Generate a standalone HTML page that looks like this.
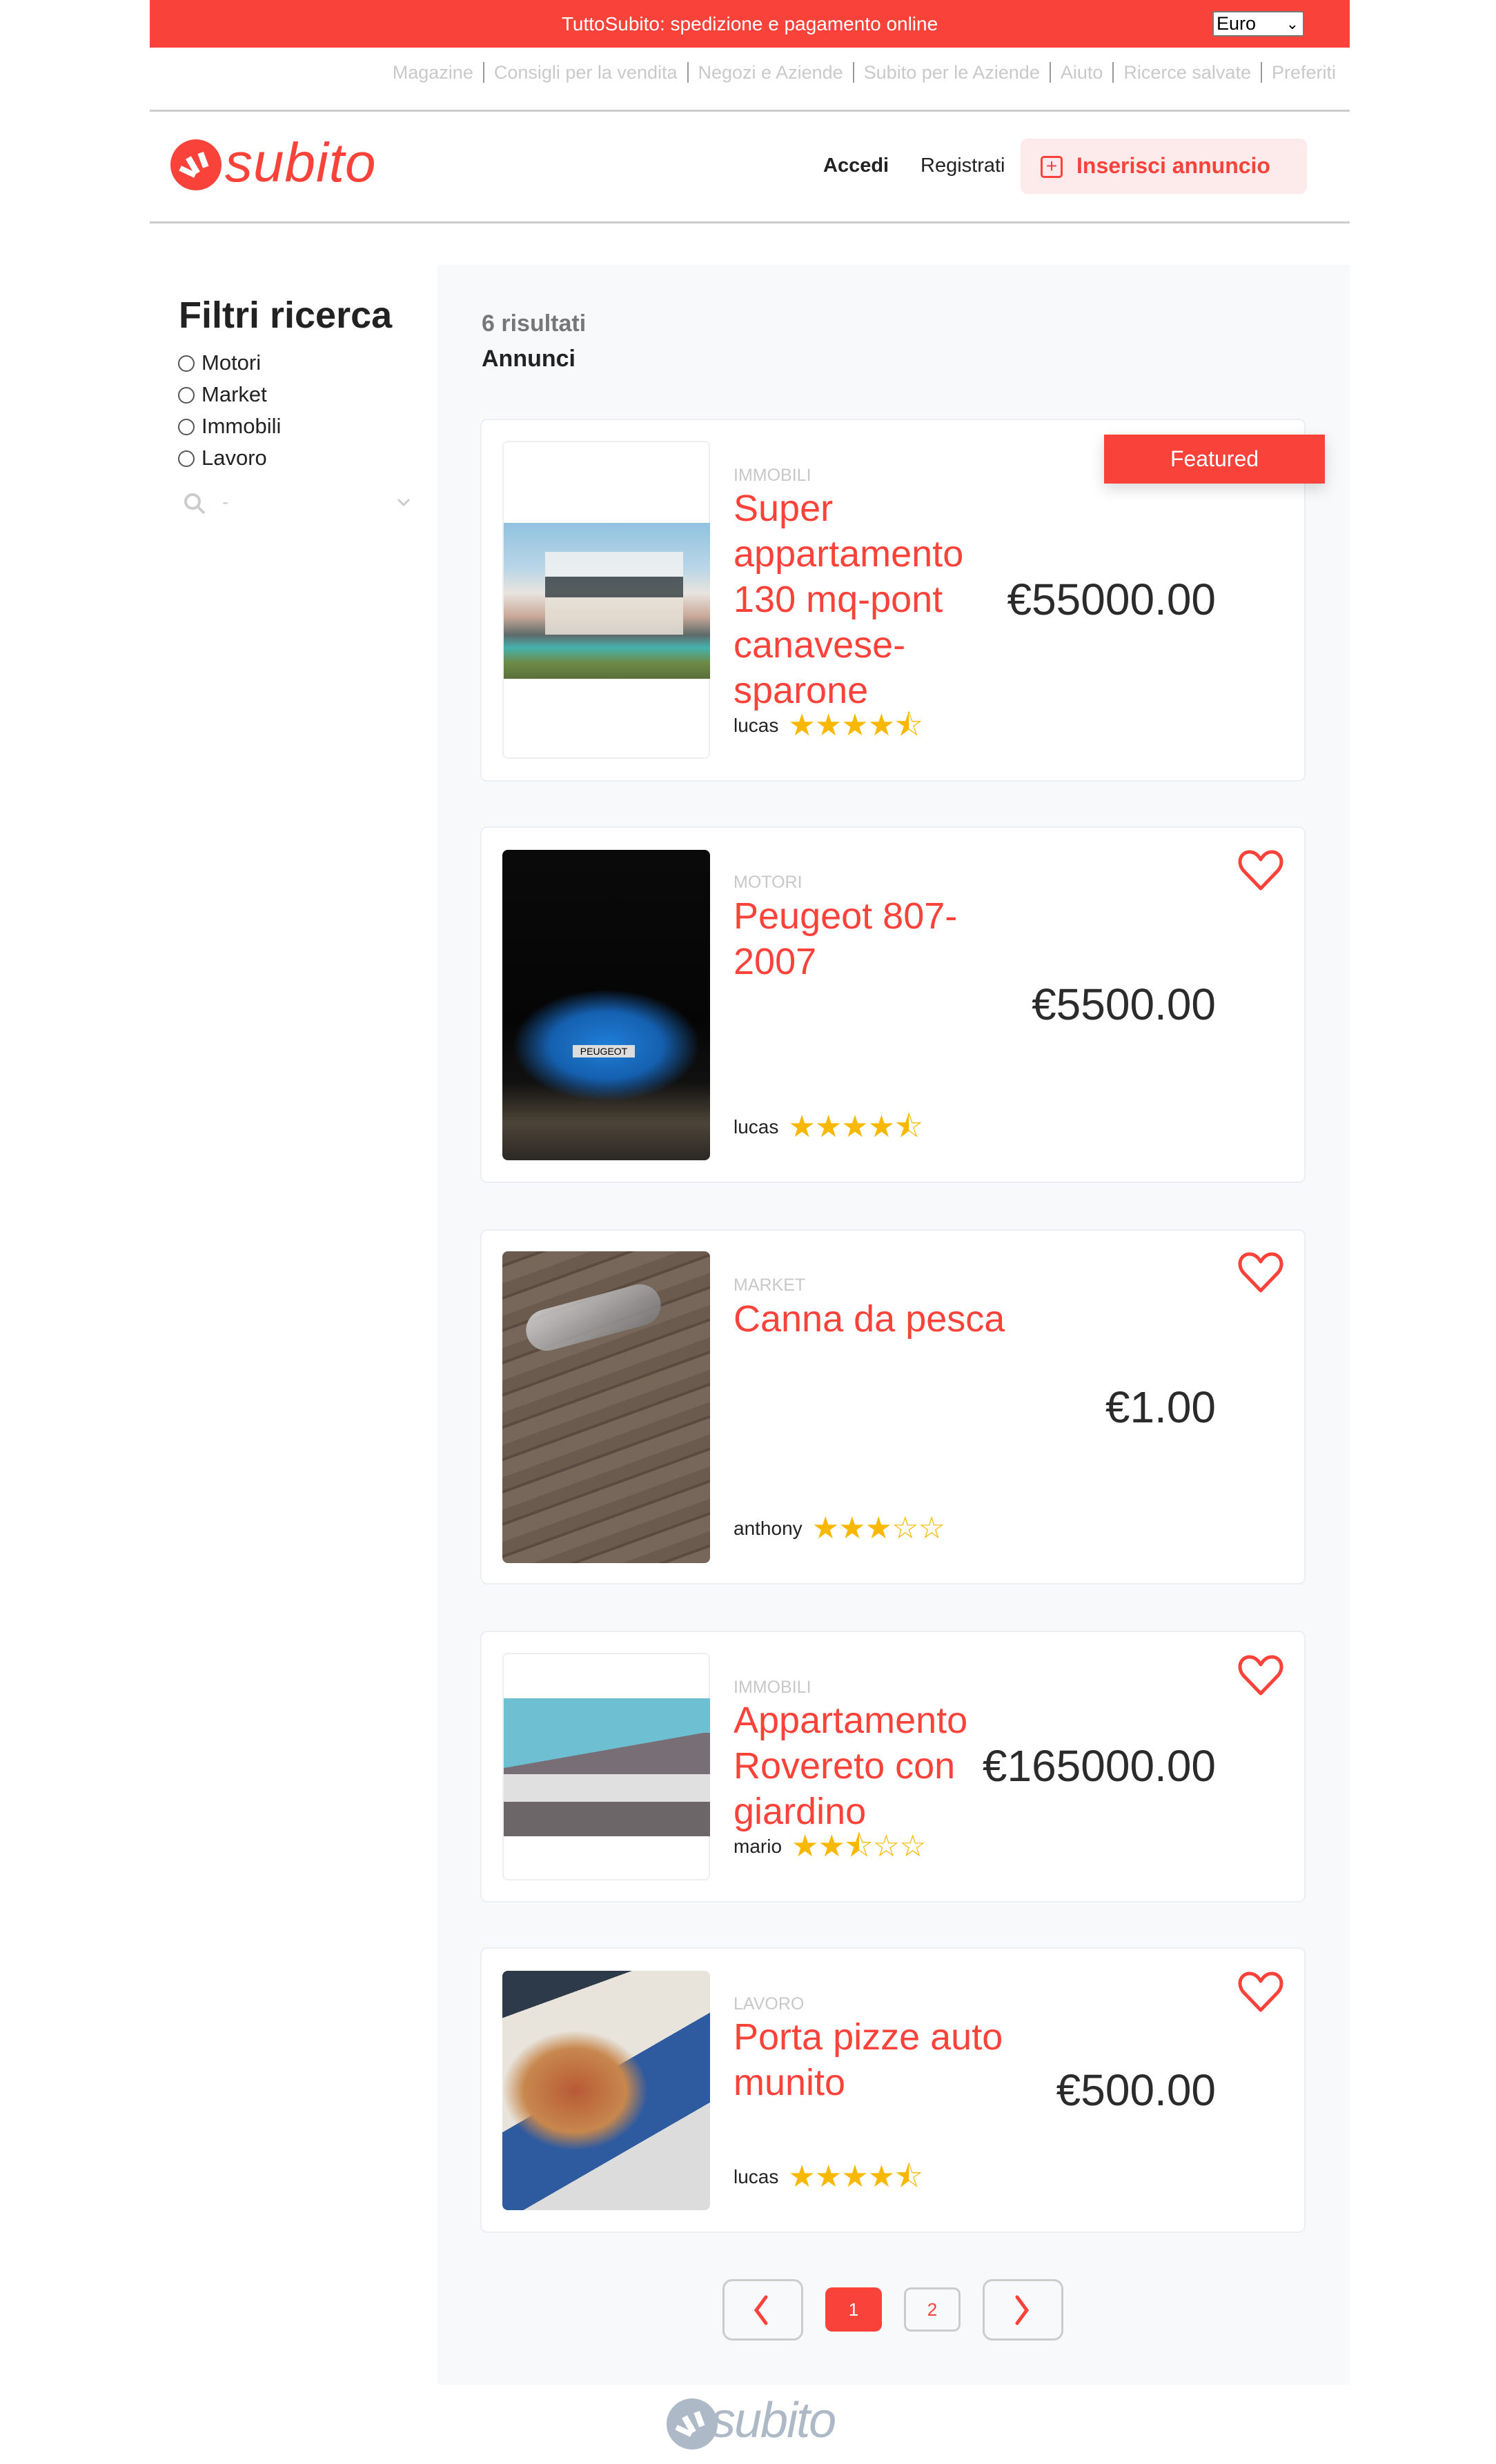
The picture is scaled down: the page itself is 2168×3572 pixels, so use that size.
<!DOCTYPE html>
<html><head><meta charset="utf-8">
<style>
*{margin:0;padding:0;box-sizing:border-box}
body{width:2168px;height:3572px;position:relative;background:#fff;font-family:"Liberation Sans",Arial,sans-serif;overflow:hidden}
.a{position:absolute;white-space:nowrap}
.red{color:#f9423a}
.card{position:absolute;left:696px;width:1196px;background:#fff;border:2px solid #eceef1;border-radius:10px}
.img{position:absolute;left:728px;width:301px;border-radius:8px;overflow:hidden}
.cat{position:absolute;left:1063px;font-size:25px;color:#c8c8c8;line-height:30px}
.title{position:absolute;left:1063px;font-size:54px;line-height:66px;color:#f9423a;white-space:nowrap}
.price{position:absolute;right:406px;font-size:64px;line-height:76px;color:#2b2b2b;white-space:nowrap}
.user{position:absolute;left:1063px;font-size:28px;line-height:40px;color:#222;white-space:nowrap}
.user span{color:#f8b800;font-size:44px;vertical-align:-5px;letter-spacing:-1px;margin-left:14px}
.heart{position:absolute;left:1792px;width:70px;height:64px}
.nav{color:#c9c9c9;font-size:27px}
.nav i{display:inline-block;width:2px;height:30px;background:#999;vertical-align:-6px;margin:0 14px}
</style></head><body>
<div class="a" style="left:217px;top:0;width:1739px;height:69px;background:#f9423a"></div>
<div class="a" style="left:217px;top:0;width:1739px;height:69px;line-height:70px;text-align:center;color:#fff;font-size:28px">TuttoSubito: spedizione e pagamento online</div>
<div class="a" style="left:1757px;top:16px;width:133px;height:37px;background:#fff;border:2px solid #777;border-radius:3px;font-size:27px;line-height:33px;padding-left:4px;color:#000">Euro<span style="position:absolute;right:6px;top:0;font-size:22px">&#8964;</span></div>
<div class="a nav" style="right:232px;top:88px;line-height:34px">Magazine<i></i>Consigli per la vendita<i></i>Negozi e Aziende<i></i>Subito per le Aziende<i></i>Aiuto<i></i>Ricerce salvate<i></i>Preferiti</div>
<div class="a" style="left:217px;top:159px;width:1739px;height:3px;background:#ccc"></div>
<svg class="a" style="left:246px;top:201px" width="76" height="76" viewBox="0 0 76 76"><circle cx="38" cy="38" r="37" fill="#f9423a"/><rect x="29" y="26" width="9" height="26" fill="#fff" transform="rotate(-30 33 39)"/><rect x="44" y="20" width="9" height="22" fill="#fff" transform="rotate(-20 48 31)"/><rect x="14" y="44" width="24" height="8" fill="#fff" transform="rotate(25 26 48)"/></svg>
<div class="a red" style="left:326px;top:186px;font-size:80px;line-height:100px;letter-spacing:1px;font-style:italic">subito</div>
<div class="a" style="left:1193px;top:224px;font-size:29px;font-weight:bold;color:#222">Accedi</div>
<div class="a" style="left:1334px;top:224px;font-size:29px;color:#222">Registrati</div>
<div class="a" style="left:1479px;top:201px;width:415px;height:80px;background:#fdeaea;border-radius:10px"></div>
<div class="a" style="left:1508px;top:226px;width:32px;height:32px;border:3px solid #f9423a;border-radius:5px;color:#f9423a;font-size:28px;line-height:24px;text-align:center">+</div>
<div class="a red" style="left:1560px;top:222px;font-size:32px;font-weight:bold">Inserisci annuncio</div>
<div class="a" style="left:217px;top:321px;width:1739px;height:3px;background:#ccc"></div>
<div class="a" style="left:634px;top:384px;width:1322px;height:3073px;background:#f8f9fb"></div>
<div class="a" style="left:259px;top:426px;font-size:54px;font-weight:bold;color:#222">Filtri ricerca</div>
<div class="a" style="left:258px;top:508px;font-size:31px;line-height:36px;color:#222">
<div style="height:46px"><span style="display:inline-block;width:24px;height:24px;border:2px solid #555;border-radius:50%;vertical-align:-3px;margin-right:10px"></span>Motori</div>
<div style="height:46px"><span style="display:inline-block;width:24px;height:24px;border:2px solid #555;border-radius:50%;vertical-align:-3px;margin-right:10px"></span>Market</div>
<div style="height:46px"><span style="display:inline-block;width:24px;height:24px;border:2px solid #555;border-radius:50%;vertical-align:-3px;margin-right:10px"></span>Immobili</div>
<div style="height:46px"><span style="display:inline-block;width:24px;height:24px;border:2px solid #555;border-radius:50%;vertical-align:-3px;margin-right:10px"></span>Lavoro</div>
</div>
<svg class="a" style="left:265px;top:713px" width="36" height="36" viewBox="0 0 36 36"><circle cx="14" cy="14" r="10" fill="none" stroke="#ccc" stroke-width="4"/><line x1="21" y1="21" x2="31" y2="31" stroke="#ccc" stroke-width="4"/></svg>
<div class="a" style="left:322px;top:712px;color:#ccc;font-size:28px">-</div>
<svg class="a" style="left:574px;top:720px" width="22" height="16" viewBox="0 0 22 16"><path d="M3 4 L11 12 L19 4" fill="none" stroke="#ccc" stroke-width="3"/></svg>
<div class="a" style="left:698px;top:450px;font-size:34px;font-weight:bold;color:#777">6 risultati</div>
<div class="a" style="left:698px;top:501px;font-size:34px;font-weight:bold;color:#222">Annunci</div>

<div class="card" style="top:607px;height:526px"></div>
<div class="img" style="top:639px;height:461px;border:2px solid #eee;background:#fff"></div>
<div class="a" style="left:730px;top:758px;width:299px;height:226px;background:linear-gradient(180deg,#8fc2e0 0%,#bcd6e6 30%,#e8e4df 45%,#c9a898 60%,#5d6a6a 72%,#46b1ad 80%,#6e8a45 90%,#59703a 100%)"></div>
<div class="a" style="left:790px;top:800px;width:200px;height:120px;background:linear-gradient(180deg,#f2f2f2 0 30%,#3a4448 30% 55%,#e8e2d8 55% 100%);opacity:.85"></div>
<div class="cat" style="top:674px">IMMOBILI</div>
<div class="title" style="top:704px">Super<br>appartamento<br>130 mq-pont<br>canavese-<br>sparone</div>
<div class="price" style="top:831px">€55000.00</div>
<div class="user" style="top:1032px">lucas<span>★★★★⯪</span></div>
<div class="a" style="left:1600px;top:630px;width:320px;height:71px;background:#f9423a;box-shadow:0 8px 20px rgba(0,0,0,.15);color:#fff;font-size:32px;line-height:71px;text-align:center">Featured</div>

<div class="card" style="top:1198px;height:517px"></div>
<div class="img" style="top:1232px;height:450px;background:radial-gradient(ellipse 45% 18% at 50% 63%,#1f7fd8 0%,#1560b0 60%,transparent 100%),linear-gradient(180deg,#0a0a0a 0%,#050505 55%,#111 75%,#4d4438 88%,#2c2824 100%)"></div>
<div class="a" style="left:830px;top:1515px;width:90px;height:18px;background:#ddd;font-size:14px;text-align:center;line-height:18px">PEUGEOT</div>
<svg class="heart" style="top:1230px" viewBox="0 0 70 64"><path d="M35 58 L10 32 C0 20 6 5 19 5 C27 5 32 11 35 16 C38 11 43 5 51 5 C64 5 70 20 60 32 Z" fill="none" stroke="#f9423a" stroke-width="5" stroke-linejoin="round"/></svg>
<div class="cat" style="top:1264px">MOTORI</div>
<div class="title" style="top:1295px">Peugeot 807-<br>2007</div>
<div class="price" style="top:1418px">€5500.00</div>
<div class="user" style="top:1614px">lucas<span>★★★★⯪</span></div>

<div class="card" style="top:1782px;height:515px"></div>
<div class="img" style="top:1814px;height:452px;background:repeating-linear-gradient(160deg,#6b5a4e 0 18px,#5a4a40 18px 22px,#77665a 22px 44px),linear-gradient(#6b5a4e,#3e332c)"></div>
<div class="a" style="left:760px;top:1880px;width:200px;height:60px;border-radius:30px;background:linear-gradient(160deg,#d8d8d8,#777);transform:rotate(-15deg);opacity:.85"></div>
<svg class="heart" style="top:1813px" viewBox="0 0 70 64"><path d="M35 58 L10 32 C0 20 6 5 19 5 C27 5 32 11 35 16 C38 11 43 5 51 5 C64 5 70 20 60 32 Z" fill="none" stroke="#f9423a" stroke-width="5" stroke-linejoin="round"/></svg>
<div class="cat" style="top:1848px">MARKET</div>
<div class="title" style="top:1879px">Canna da pesca</div>
<div class="price" style="top:2002px">€1.00</div>
<div class="user" style="top:2196px">anthony<span>★★★☆☆</span></div>

<div class="card" style="top:2364px;height:394px"></div>
<div class="img" style="top:2396px;height:330px;border:2px solid #eee;background:#fff"></div>
<div class="a" style="left:730px;top:2462px;width:299px;height:200px;background:linear-gradient(170deg,#6fbfd3 0 40%,transparent 40%),linear-gradient(180deg,#6fbfd3 0 25%,#776f75 25% 55%,#e0e0e0 55% 75%,#6d6669 75%)"></div>
<svg class="heart" style="top:2397px" viewBox="0 0 70 64"><path d="M35 58 L10 32 C0 20 6 5 19 5 C27 5 32 11 35 16 C38 11 43 5 51 5 C64 5 70 20 60 32 Z" fill="none" stroke="#f9423a" stroke-width="5" stroke-linejoin="round"/></svg>
<div class="cat" style="top:2431px">IMMOBILI</div>
<div class="title" style="top:2461px">Appartamento<br>Rovereto con<br>giardino</div>
<div class="price" style="top:2522px">€165000.00</div>
<div class="user" style="top:2657px">mario<span>★★⯪☆☆</span></div>

<div class="card" style="top:2823px;height:414px"></div>
<div class="img" style="top:2857px;height:347px;background:linear-gradient(160deg,#2c3a4a 0 15%,transparent 15%),radial-gradient(ellipse 35% 25% at 35% 50%,#b85a36 0%,#c7874d 70%,transparent 100%),linear-gradient(150deg,#e8e4dc 0 45%,#2e5aa0 45% 70%,#dcdcdc 70%)"></div>
<svg class="heart" style="top:2856px" viewBox="0 0 70 64"><path d="M35 58 L10 32 C0 20 6 5 19 5 C27 5 32 11 35 16 C38 11 43 5 51 5 C64 5 70 20 60 32 Z" fill="none" stroke="#f9423a" stroke-width="5" stroke-linejoin="round"/></svg>
<div class="cat" style="top:2890px">LAVORO</div>
<div class="title" style="top:2920px">Porta pizze auto<br>munito</div>
<div class="price" style="top:2992px">€500.00</div>
<div class="user" style="top:3136px">lucas<span>★★★★⯪</span></div>

<div class="a" style="left:1047px;top:3304px;width:117px;height:89px;border:3px solid #ccc;border-radius:14px"></div>
<svg class="a" style="left:1088px;top:3326px" width="30" height="46" viewBox="0 0 30 46"><path d="M22 4 L8 23 L22 42" fill="none" stroke="#f9423a" stroke-width="5" stroke-linecap="round"/></svg>
<div class="a" style="left:1196px;top:3316px;width:82px;height:64px;background:#f9423a;border-radius:10px;color:#fff;font-size:26px;line-height:64px;text-align:center">1</div>
<div class="a" style="left:1310px;top:3316px;width:82px;height:64px;border:3px solid #ccc;border-radius:10px;color:#f9423a;font-size:26px;line-height:58px;text-align:center">2</div>
<div class="a" style="left:1424px;top:3304px;width:117px;height:89px;border:3px solid #ccc;border-radius:14px"></div>
<svg class="a" style="left:1466px;top:3326px" width="30" height="46" viewBox="0 0 30 46"><path d="M8 4 L22 23 L8 42" fill="none" stroke="#f9423a" stroke-width="5" stroke-linecap="round"/></svg>

<svg class="a" style="left:965px;top:3476px" width="76" height="76" viewBox="0 0 76 76"><ellipse cx="38" cy="38" rx="37" ry="37" fill="#adb9c6"/><rect x="29" y="26" width="9" height="26" fill="#fff" transform="rotate(-30 33 39)"/><rect x="44" y="20" width="9" height="22" fill="#fff" transform="rotate(-20 48 31)"/><rect x="14" y="44" width="24" height="8" fill="#fff" transform="rotate(25 26 48)"/></svg>
<div class="a" style="left:1030px;top:3461px;font-size:72px;line-height:96px;font-style:italic;color:#adb9c6;letter-spacing:-2px">subito</div>
</body></html>
